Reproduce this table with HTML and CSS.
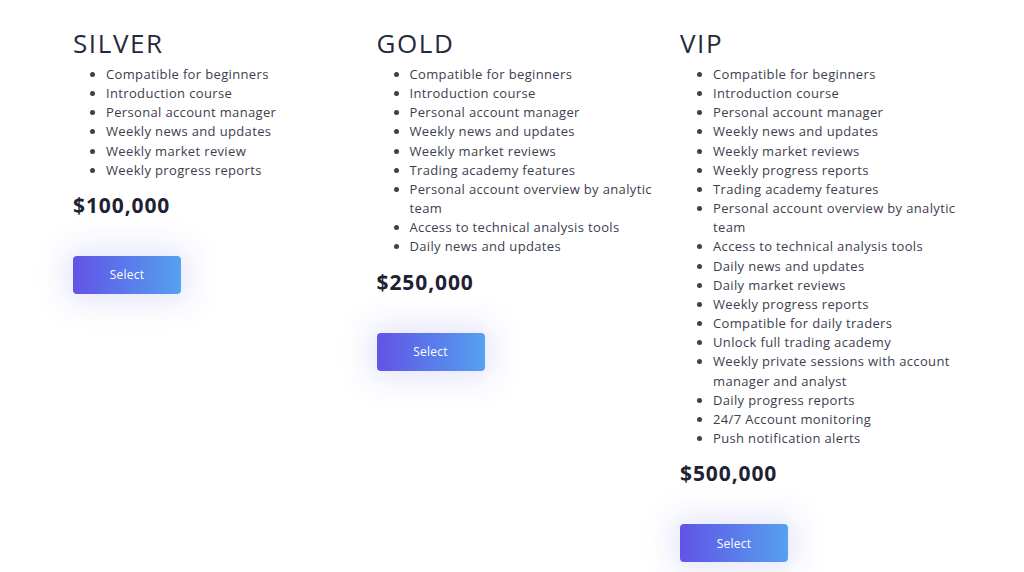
FILE: index.html
```html
<!DOCTYPE html>
<html lang="en">
<head>
<meta charset="utf-8">
<title>Plans</title>
<link rel="stylesheet" href="styles.css">
</head>
<body>
<main class="plans">
  <section class="plan">
    <h2 class="plan-title">SILVER</h2>
    <ul class="features">
      <li>Compatible for beginners</li>
      <li>Introduction course</li>
      <li>Personal account manager</li>
      <li>Weekly news and updates</li>
      <li>Weekly market review</li>
      <li>Weekly progress reports</li>
    </ul>
    <p class="price">$100,000</p>
    <button class="select-btn">Select</button>
  </section>
  <section class="plan">
    <h2 class="plan-title">GOLD</h2>
    <ul class="features">
      <li>Compatible for beginners</li>
      <li>Introduction course</li>
      <li>Personal account manager</li>
      <li>Weekly news and updates</li>
      <li>Weekly market reviews</li>
      <li>Trading academy features</li>
      <li>Personal account overview by analytic team</li>
      <li>Access to technical analysis tools</li>
      <li>Daily news and updates</li>
    </ul>
    <p class="price">$250,000</p>
    <button class="select-btn">Select</button>
  </section>
  <section class="plan">
    <h2 class="plan-title">VIP</h2>
    <ul class="features">
      <li>Compatible for beginners</li>
      <li>Introduction course</li>
      <li>Personal account manager</li>
      <li>Weekly news and updates</li>
      <li>Weekly market reviews</li>
      <li>Weekly progress reports</li>
      <li>Trading academy features</li>
      <li>Personal account overview by analytic team</li>
      <li>Access to technical analysis tools</li>
      <li>Daily news and updates</li>
      <li>Daily market reviews</li>
      <li>Weekly progress reports</li>
      <li>Compatible for daily traders</li>
      <li>Unlock full trading academy</li>
      <li>Weekly private sessions with account manager and analyst</li>
      <li>Daily progress reports</li>
      <li>24/7 Account monitoring</li>
      <li>Push notification alerts</li>
    </ul>
    <p class="price">$500,000</p>
    <button class="select-btn">Select</button>
  </section>
</main>
</body>
</html>
```

FILE: styles.css
```css
* { box-sizing: border-box; }
html, body {
  margin: 0;
  padding: 0;
  background: #ffffff;
  overflow: hidden;
}
body {
  font-family: "Open Sans", "Noto Sans", sans-serif;
  color: #3d4050;
  height: 572px;
}
.plans {
  display: grid;
  grid-template-columns: 303.5px 303.5px 303.5px;
  padding-left: 73px;
  padding-top: 27px;
}
.plan-title {
  margin: 0;
  font-size: 26px;
  font-weight: 400;
  line-height: 32px;
  letter-spacing: 1.6px;
  color: #262a3e;
}
.features {
  margin: 6px 0 0 0;
  padding-left: 33px;
  padding-right: 24px;
  font-size: 13px;
  line-height: 19.15px;
  letter-spacing: 0.35px;
  color: #3d4050;
}
.price {
  margin: 12px 0 0 0;
  font-size: 21px;
  font-weight: 700;
  line-height: 26px;
  letter-spacing: 0.9px;
  color: #1e2234;
}
.select-btn {
  display: block;
  margin-top: 38px;
  width: 108px;
  height: 38px;
  border: none;
  border-radius: 4px;
  background: linear-gradient(90deg, #6253e6 0%, #5a7aeb 50%, #55a1ef 100%);
  color: #ffffff;
  font-family: inherit;
  font-size: 12px;
  letter-spacing: 0.2px;
  box-shadow: 0 0 30px 8px rgba(110, 110, 240, 0.18);
}
```
